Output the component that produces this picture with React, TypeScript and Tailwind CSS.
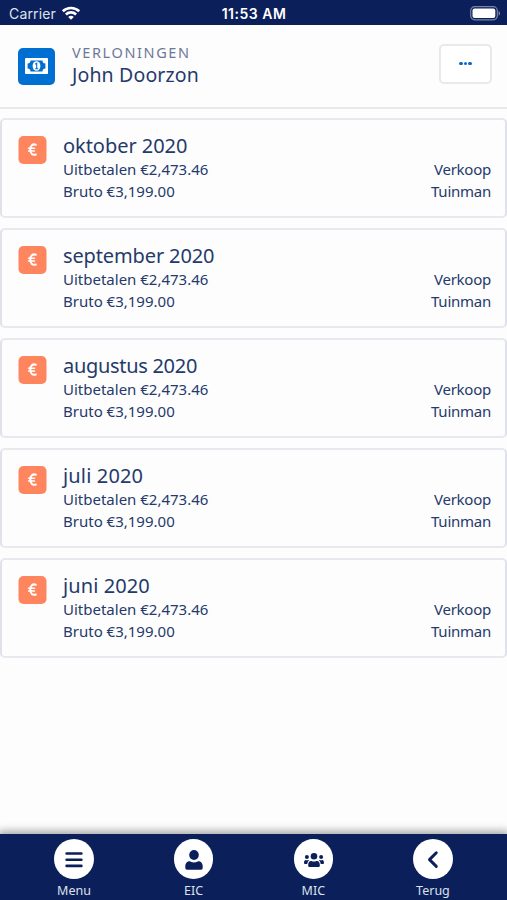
import React from "react";

const months = [
  { label: "oktober 2020", tracking: "tracking-[-0.05px]" },
  { label: "september 2020", tracking: "tracking-[-0.13px]" },
  { label: "augustus 2020", tracking: "tracking-[-0.3px]" },
  { label: "juli 2020", tracking: "tracking-[0.15px]" },
  { label: "juni 2020", tracking: "tracking-[0.1px]" },
];

function Wifi() {
  return (
    <svg width="20" height="16" viewBox="0 0 20 16" fill="none" stroke="#fff" strokeWidth="2.6">
      <path d="M1.8 5.3a11.7 11.7 0 0 1 16.4 0" />
      <path d="M4.9 8.5a7.3 7.3 0 0 1 10.2 0" />
      <path d="M10 13.8 7.2 11a4 4 0 0 1 5.6 0z" fill="#fff" stroke="none" />
    </svg>
  );
}

function Battery() {
  return (
    <svg width="31" height="15" viewBox="0 0 31 15">
      <rect x="0.7" y="0.7" width="26.6" height="13.1" rx="4" fill="none" stroke="#fff" strokeOpacity="0.45" strokeWidth="1.2" />
      <rect x="2.5" y="2.5" width="22.8" height="9.5" rx="2" fill="#fff" />
      <path d="M28.6 5v4.6c2-.8 2-3.8 0-4.6z" fill="#fff" fillOpacity="0.45" />
    </svg>
  );
}

function Banknote() {
  return (
    <svg width="23" height="16" viewBox="0 0 23 16">
      <rect width="23" height="16" rx="0.8" fill="#fff" />
      <path d="M5.500 2.600h12a2.900 2.900 0 0 0 2.900 2.900v5a2.900 2.900 0 0 0-2.900 2.900h-12a2.900 2.900 0 0 0-2.900-2.900v-5a2.900 2.900 0 0 0 2.900-2.900z" fill="#006fd2" />
      <ellipse cx="11.500" cy="8" rx="3.900" ry="4.800" fill="#fff" />
      <path d="M10.200 6.200l1.500-1v5.200M10.200 10.700h3" fill="none" stroke="#006fd2" strokeWidth="1.100" />
    </svg>
  );
}

function Euro() {
  return (
    <svg width="28" height="28" viewBox="0 0 28 28" fill="none" stroke="#fff" strokeLinecap="round">
      <path d="M17.300 8.700c-3.100-1.100-5.500 1-5.500 4.900s2.400 6 5.500 4.900" strokeWidth="2.100" />
      <path d="M10 12.200h6M10 15h6" strokeWidth="1.400" />
    </svg>
  );
}

function Card({ month, tracking }: { month: string; tracking: string }) {
  return (
    <article className="flex h-[100px] rounded-[5px] border-2 border-x-[#e0e1ea] border-y-[#e8e9ee] bg-[#fdfdfd] pt-[14px] pr-[14px] pl-[17px]">
      <div className="mt-0.5 mr-4 h-[27.5px] w-[27.5px] shrink-0 -translate-x-[0.5px] rounded-[5px] bg-[#ff855f]"><Euro /></div>
      <div className="ml-[0.5px] flex-1">
        <h2 className={`h-6 text-[20px] leading-6 whitespace-nowrap ${tracking}`}>{month}</h2>
        <div className="flex justify-between text-[15px] leading-[22px]">
          <span>Uitbetalen €2,473.46</span>
          <span className="tracking-[-0.25px]">Verkoop</span>
        </div>
        <div className="flex justify-between text-[15px] leading-[22px]">
          <span>Bruto €3,199.00</span>
          <span className="tracking-[-0.25px]">Tuinman</span>
        </div>
      </div>
    </article>
  );
}

function MenuIcon() {
  return (
    <svg width="40" height="40" viewBox="0 0 40 40" stroke="#0b1f5a" strokeWidth="2.600" strokeLinecap="round">
      <path d="M12.600 14.500h14.800M12.600 20.700h14.800M12.600 26.900h14.800" />
    </svg>
  );
}

function PersonIcon() {
  return (
    <svg width="40" height="40" viewBox="0 0 40 40" fill="#0b1f5a">
      <ellipse cx="20" cy="16" rx="4.800" ry="4.900" />
      <path d="M15.400 22.300c1.500 0 2 1.300 4.600 1.300s3.100-1.300 4.600-1.300c2.300 0 4.100 2.200 4.100 4.800v1.900q0 1.700-1.700 1.700H13q-1.700 0-1.700-1.700v-1.900c0-2.600 1.800-4.800 4.100-4.800z" />
    </svg>
  );
}

function PeopleIcon() {
  return (
    <svg width="40" height="40" viewBox="0 0 40 40" fill="#0b1f5a">
      <circle cx="20" cy="17.200" r="3.300" />
      <path d="M16.900 21.900c1 0 1.300.6 3.100.6s2.100-.6 3.100-.6c1.500 0 2.700 1.700 2.700 3.600v1.200q0 1.200-1.200 1.200h-9.200q-1.200 0-1.200-1.200v-1.200c0-1.900 1.200-3.600 2.700-3.600z" />
      <circle cx="12.900" cy="18" r="2" />
      <circle cx="27.100" cy="18" r="2" />
      <path d="M11.600 21c.8.400 1.800.4 2.600 0l.9.300c-1 1-1.600 2.100-1.800 3.600h-2.300q-1 0-1-1c0-1.500.6-2.700 1.600-2.900zM28.400 21c-.8.400-1.800.4-2.600 0l-.9.300c1 1 1.600 2.100 1.800 3.600h2.300q1 0 1-1c0-1.500-.6-2.700-1.600-2.900z" />
    </svg>
  );
}

function BackIcon() {
  return (
    <svg width="40" height="40" viewBox="0 0 40 40" fill="none" stroke="#0b1f5a" strokeWidth="2.900" strokeLinecap="round" strokeLinejoin="round">
      <path d="M23.300 13.800 16.500 20.600l6.800 6.800" />
    </svg>
  );
}

const tabs = [
  { label: "Menu", Icon: MenuIcon },
  { label: "EIC", Icon: PersonIcon },
  { label: "MIC", Icon: PeopleIcon },
  { label: "Terug", Icon: BackIcon },
];

export default function App() {
  return (
    <div className="flex h-[900px] w-[507px] flex-col overflow-hidden bg-[#fdfdfd] font-['Noto_Sans',sans-serif] text-[#253a6b]">
      <div className="grid h-[25px] shrink-0 grid-cols-3 items-center bg-[#0b1f5a] pt-0.5 pr-[6px] pl-[9px] font-['Inter',sans-serif] text-[14px] leading-5 text-white">
        <div className="flex items-center gap-[5px]">
          <span className="tracking-[0.15px] text-[#dfe3ee]">Carrier</span>
          <Wifi />
        </div>
        <span className="-ml-0.5 text-center font-semibold tracking-[0.5px]">11:53 AM</span>
        <div className="flex justify-end"><Battery /></div>
      </div>
      <header className="flex h-[84px] shrink-0 items-start border-b-2 border-[#e9e9ec] pr-[15px] pl-[18px]">
        <div className="mt-[23px] flex h-[37px] w-[37px] items-center justify-center rounded-[5px] bg-[#006fd2] pb-[2px]"><Banknote /></div>
        <div className="mt-[17px] ml-[17px] flex-1">
          <p className="h-[21px] text-[14.5px] leading-5 tracking-[1.6px] text-[#6d7899]">VERLONINGEN</p>
          <h1 className="text-[19.5px] leading-6 tracking-[0.15px]">John Doorzon</h1>
        </div>
        <button className="mt-[19px] flex h-10 w-[53px] items-center justify-center gap-[0.5px] rounded-[5px] border-2 border-[#e9e9eb] bg-white pb-px">
          <i className="h-[3.8px] w-[3.8px] rounded-full bg-[#0669c9]" />
          <i className="h-[3.8px] w-[3.8px] rounded-full bg-[#0669c9]" />
          <i className="h-[3.8px] w-[3.8px] rounded-full bg-[#0669c9]" />
        </button>
      </header>
      <main className="flex flex-1 flex-col gap-[10px] pt-[9px]">
        {months.map(({ label, tracking }) => <Card key={label} month={label} tracking={tracking} />)}
      </main>
      <nav className="flex h-[66px] shrink-0 justify-between bg-[#0b1f5a] px-[44px] pt-[5px] shadow-[0_-1px_8px_2px_rgba(0,0,0,0.35)]">
        {tabs.map(({ label, Icon }) => (
          <div key={label} className="flex w-[60px] flex-col items-center">
            <div className="h-[39.5px] w-[39.5px] rounded-full bg-white"><Icon /></div>
            <span className="mt-[4px] text-[12.5px] leading-4 text-[#dde1ed]">{label}</span>
          </div>
        ))}
      </nav>
    </div>
  );
}
